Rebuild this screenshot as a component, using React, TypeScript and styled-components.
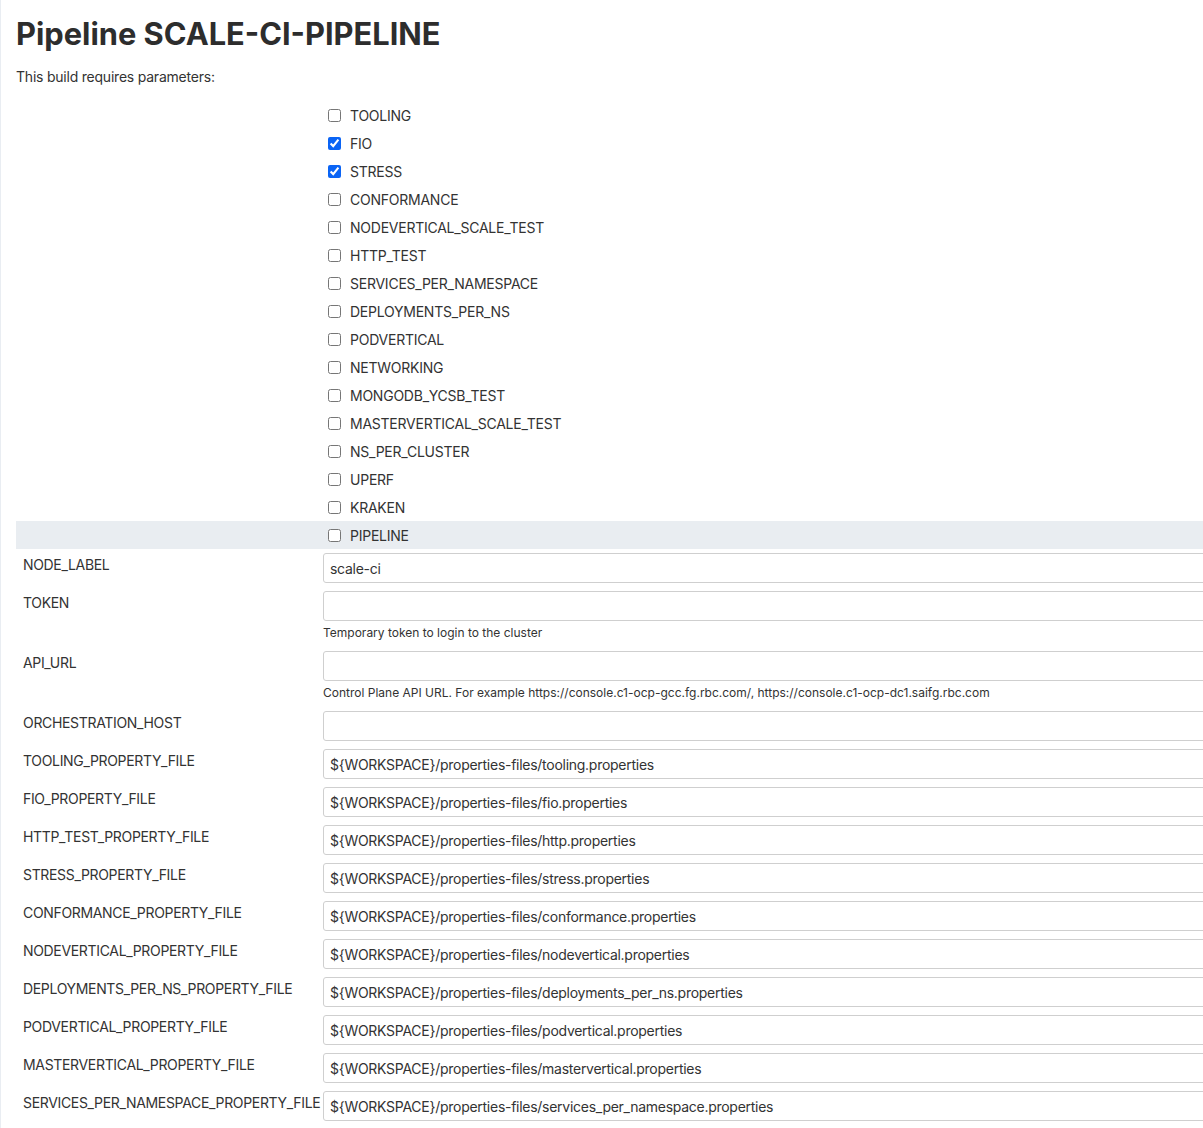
import React from "react";
import styled, { createGlobalStyle } from "styled-components";

const Global = createGlobalStyle`
  html, body { margin: 0; padding: 0; background: #fff; }
  body {
    font-family: Inter, "Noto Sans", sans-serif;
    color: #333;
    border-left: 1px solid #e9edf2;
    min-height: 1128px;
    box-sizing: border-box;
    overflow: hidden;
  }
`;

const Page = styled.div`
  padding: 16px 0 0 15px;
  width: 1320px;
`;

const Title = styled.h1`
  margin: 0;
  font-size: 30.8px;
  line-height: 36px;
  font-weight: 700;
  color: #2d2d2d;
`;

const Intro = styled.p`
  margin: 15px 0 14px;
  font-size: 14px;
  line-height: 20px;
  letter-spacing: -0.22px;
`;

const Form = styled.div`
  display: grid;
  grid-template-columns: 307px 1fr;
`;

const CheckRow = styled.label<{ $hl?: boolean }>`
  grid-column: 1 / -1;
  display: grid;
  grid-template-columns: 307px 1fr;
  height: 28px;
  align-items: center;
  background: ${(p) => (p.$hl ? "#e9edf1" : "transparent")};
`;

const CheckCell = styled.span`
  grid-column: 2;
  display: flex;
  align-items: center;
  font-size: 14px;
  letter-spacing: -0.24px;
  color: #333;
`;

const Box = styled.input`
  width: 13px;
  height: 13px;
  margin: 0 9px 0 5px;
  accent-color: #0a64f5;
`;

const Name = styled.div`
  padding: 6px 0 0 7px;
  font-size: 14px;
  line-height: 20px;
  letter-spacing: -0.33px;
  color: #333;
  white-space: nowrap;
`;

const Value = styled.div`
  padding: 4px 0;
  display: flex;
  flex-direction: column;
`;

const Field = styled.input`
  box-sizing: border-box;
  width: 100%;
  height: 30px;
  border: 1px solid #cfcfcf;
  border-radius: 3px;
  padding: 0 6px;
  font-family: Inter, "Noto Sans", sans-serif;
  font-size: 14px;
  letter-spacing: -0.27px;
  color: #333;
  background: #fff;
  outline: none;
`;

const Help = styled.div`
  font-size: 12px;
  line-height: 16px;
  padding: 4px 0 2px;
  color: #333;
`;

const checks: [string, boolean][] = [
  ["TOOLING", false],
  ["FIO", true],
  ["STRESS", true],
  ["CONFORMANCE", false],
  ["NODEVERTICAL_SCALE_TEST", false],
  ["HTTP_TEST", false],
  ["SERVICES_PER_NAMESPACE", false],
  ["DEPLOYMENTS_PER_NS", false],
  ["PODVERTICAL", false],
  ["NETWORKING", false],
  ["MONGODB_YCSB_TEST", false],
  ["MASTERVERTICAL_SCALE_TEST", false],
  ["NS_PER_CLUSTER", false],
  ["UPERF", false],
  ["KRAKEN", false],
  ["PIPELINE", false],
];

const P = "${WORKSPACE}/properties-files/";

const fields: { name: string; value: string; help?: string }[] = [
  { name: "NODE_LABEL", value: "scale-ci" },
  { name: "TOKEN", value: "", help: "Temporary token to login to the cluster" },
  {
    name: "API_URL",
    value: "",
    help: "Control Plane API URL. For example https://console.c1-ocp-gcc.fg.rbc.com/, https://console.c1-ocp-dc1.saifg.rbc.com",
  },
  { name: "ORCHESTRATION_HOST", value: "" },
  { name: "TOOLING_PROPERTY_FILE", value: P + "tooling.properties" },
  { name: "FIO_PROPERTY_FILE", value: P + "fio.properties" },
  { name: "HTTP_TEST_PROPERTY_FILE", value: P + "http.properties" },
  { name: "STRESS_PROPERTY_FILE", value: P + "stress.properties" },
  { name: "CONFORMANCE_PROPERTY_FILE", value: P + "conformance.properties" },
  { name: "NODEVERTICAL_PROPERTY_FILE", value: P + "nodevertical.properties" },
  { name: "DEPLOYMENTS_PER_NS_PROPERTY_FILE", value: P + "deployments_per_ns.properties" },
  { name: "PODVERTICAL_PROPERTY_FILE", value: P + "podvertical.properties" },
  { name: "MASTERVERTICAL_PROPERTY_FILE", value: P + "mastervertical.properties" },
  { name: "SERVICES_PER_NAMESPACE_PROPERTY_FILE", value: P + "services_per_namespace.properties" },
];

export default function App() {
  return (
    <>
      <Global />
      <Page>
        <Title>Pipeline SCALE-CI-PIPELINE</Title>
        <Intro>This build requires parameters:</Intro>
        <Form>
          {checks.map(([label, on]) => (
            <CheckRow key={label} $hl={label === "PIPELINE"}>
              <CheckCell>
                <Box type="checkbox" defaultChecked={on} />
                {label}
              </CheckCell>
            </CheckRow>
          ))}
          {fields.map((f) => (
            <React.Fragment key={f.name}>
              <Name>{f.name}</Name>
              <Value>
                <Field type="text" defaultValue={f.value} />
                {f.help && <Help>{f.help}</Help>}
              </Value>
            </React.Fragment>
          ))}
        </Form>
      </Page>
    </>
  );
}
